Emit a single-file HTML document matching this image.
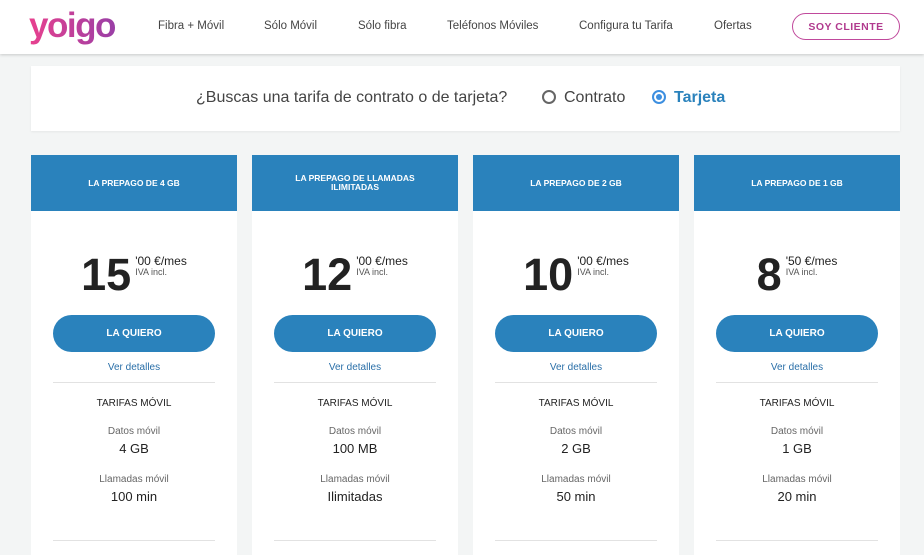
<!DOCTYPE html>
<html><head><meta charset="utf-8"><style>
*{margin:0;padding:0;box-sizing:border-box}
body{width:924px;height:541px;overflow:hidden;background:#f3f5f5;font-family:"Liberation Sans",sans-serif;position:relative;color:#222}
.hdr{position:absolute;left:0;top:0;width:924px;height:54px;background:#fff;box-shadow:0 1px 3px rgba(0,0,0,.18)}
.logo{position:absolute;left:29px;top:6px;font-size:35px;font-weight:bold;letter-spacing:-1.5px;background:linear-gradient(90deg,#e8408e,#9a3fa6);-webkit-background-clip:text;color:transparent}
.nav{position:absolute;top:20px;font-size:11.5px;color:#444}
.soy{position:absolute;left:792px;top:13px;width:108px;height:27px;border:1px solid #c0499c;border-radius:14px;color:#b13a8e;font-size:10.5px;font-weight:bold;text-align:center;line-height:26px;letter-spacing:.5px}
.q{position:absolute;left:31px;top:66px;width:869px;height:65px;background:#fff;box-shadow:0 1px 2px rgba(0,0,0,.06)}
.qt{position:absolute;top:89px;font-size:16px;color:#444}
.rad{position:absolute;top:90px;width:14px;height:14px;border-radius:50%}
.card{position:absolute;top:155px;width:206px;height:400px;background:#fff}
.ch{height:56px;background:#2a82bc;color:#fff;font-size:8.5px;font-weight:bold;display:flex;align-items:center;justify-content:center;text-align:center;padding:0 38px;line-height:9px}
.price{position:absolute;top:97px;left:0;width:206px;display:flex;justify-content:center}
.big{font-size:45px;font-weight:bold;color:#222;line-height:45px}
.sm{margin-left:4px;margin-top:4px;font-size:12px;line-height:11px;color:#222}
.sm span{font-size:9px;color:#555;display:block}
.btn{position:absolute;left:22px;top:160px;width:162px;height:37px;border-radius:19px;background:#2a82bc;color:#fff;font-size:10px;font-weight:bold;text-align:center;line-height:37px}
.ver{position:absolute;top:207px;width:206px;text-align:center;font-size:10px;color:#2a6fa8}
.ln{position:absolute;left:22px;width:162px;height:1px;background:#e2e2e2}
.t{position:absolute;width:206px;text-align:center}
</style></head><body>
<div class="hdr"></div>
<div class="logo">yoigo</div>
<div class="nav" style="left:158px">Fibra + Móvil</div>
<div class="nav" style="left:264px">Sólo Móvil</div>
<div class="nav" style="left:358px">Sólo fibra</div>
<div class="nav" style="left:447px">Teléfonos Móviles</div>
<div class="nav" style="left:579px">Configura tu Tarifa</div>
<div class="nav" style="left:714px">Ofertas</div>
<div class="soy">SOY CLIENTE</div>
<div class="q"></div>
<div class="qt" style="left:196px">¿Buscas una tarifa de contrato o de tarjeta?</div>
<div class="rad" style="left:542px;border:2px solid #666"></div>
<div class="qt" style="left:564px">Contrato</div>
<div class="rad" style="left:652px;border:2px solid #3d8fe0"><div style="width:6px;height:6px;border-radius:50%;background:#3d8fe0;margin:2px"></div></div>
<div class="qt" style="left:674px;color:#2a82bc;font-weight:bold">Tarjeta</div>

<div class="card" style="left:31px"><div class="ch">LA PREPAGO DE 4 GB</div>
<div class="price"><div class="big">15</div><div class="sm">'00 €/mes<span>IVA incl.</span></div></div>
<div class="btn">LA QUIERO</div><div class="ver">Ver detalles</div><div class="ln" style="top:227px"></div>
<div class="t" style="top:243px;font-size:10px">TARIFAS MÓVIL</div>
<div class="t" style="top:271px;font-size:10px;color:#666">Datos móvil</div>
<div class="t" style="top:286px;font-size:13px">4 GB</div>
<div class="t" style="top:319px;font-size:10px;color:#666">Llamadas móvil</div>
<div class="t" style="top:334px;font-size:13px">100 min</div>
<div class="ln" style="top:385px"></div></div>

<div class="card" style="left:252px"><div class="ch">LA PREPAGO DE LLAMADAS ILIMITADAS</div>
<div class="price"><div class="big">12</div><div class="sm">'00 €/mes<span>IVA incl.</span></div></div>
<div class="btn">LA QUIERO</div><div class="ver">Ver detalles</div><div class="ln" style="top:227px"></div>
<div class="t" style="top:243px;font-size:10px">TARIFAS MÓVIL</div>
<div class="t" style="top:271px;font-size:10px;color:#666">Datos móvil</div>
<div class="t" style="top:286px;font-size:13px">100 MB</div>
<div class="t" style="top:319px;font-size:10px;color:#666">Llamadas móvil</div>
<div class="t" style="top:334px;font-size:13px">Ilimitadas</div>
<div class="ln" style="top:385px"></div></div>

<div class="card" style="left:473px"><div class="ch">LA PREPAGO DE 2 GB</div>
<div class="price"><div class="big">10</div><div class="sm">'00 €/mes<span>IVA incl.</span></div></div>
<div class="btn">LA QUIERO</div><div class="ver">Ver detalles</div><div class="ln" style="top:227px"></div>
<div class="t" style="top:243px;font-size:10px">TARIFAS MÓVIL</div>
<div class="t" style="top:271px;font-size:10px;color:#666">Datos móvil</div>
<div class="t" style="top:286px;font-size:13px">2 GB</div>
<div class="t" style="top:319px;font-size:10px;color:#666">Llamadas móvil</div>
<div class="t" style="top:334px;font-size:13px">50 min</div>
<div class="ln" style="top:385px"></div></div>

<div class="card" style="left:694px"><div class="ch">LA PREPAGO DE 1 GB</div>
<div class="price"><div class="big">8</div><div class="sm">'50 €/mes<span>IVA incl.</span></div></div>
<div class="btn">LA QUIERO</div><div class="ver">Ver detalles</div><div class="ln" style="top:227px"></div>
<div class="t" style="top:243px;font-size:10px">TARIFAS MÓVIL</div>
<div class="t" style="top:271px;font-size:10px;color:#666">Datos móvil</div>
<div class="t" style="top:286px;font-size:13px">1 GB</div>
<div class="t" style="top:319px;font-size:10px;color:#666">Llamadas móvil</div>
<div class="t" style="top:334px;font-size:13px">20 min</div>
<div class="ln" style="top:385px"></div></div>
</body></html>
